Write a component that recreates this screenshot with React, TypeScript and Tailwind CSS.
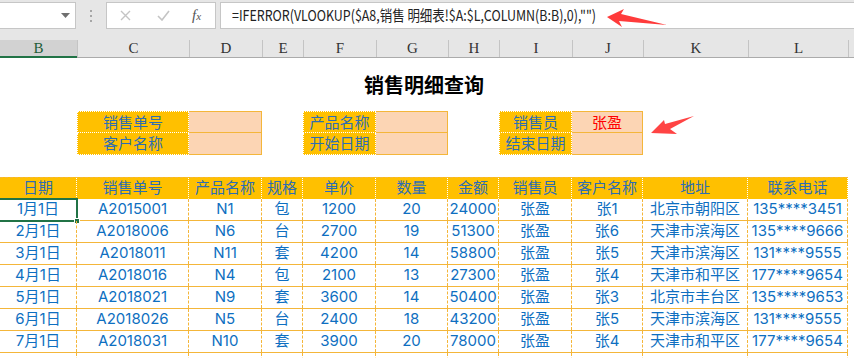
import React from "react";

// 表格列宽（B..L），与表头、表单、明细共用
const COLS =
  "grid grid-cols-[77px_112px_73px_41px_73px_72px_51px_73px_71px_105px_100px]";

const letters = ["B", "C", "D", "E", "F", "G", "H", "I", "J", "K", "L"];

const headers = ["日期", "销售单号", "产品名称", "规格", "单价", "数量", "金额", "销售员", "客户名称", "地址", "联系电话"];

const rows = [
  ["1月1日", "A2015001", "N1", "包", "1200", "20", "24000", "张盈", "张1", "北京市朝阳区", "135****3451"],
  ["2月1日", "A2018006", "N6", "台", "2700", "19", "51300", "张盈", "张6", "天津市滨海区", "135****9666"],
  ["3月1日", "A2018011", "N11", "套", "4200", "14", "58800", "张盈", "张5", "天津市滨海区", "131****9555"],
  ["4月1日", "A2018016", "N4", "包", "2100", "13", "27300", "张盈", "张4", "天津市和平区", "177****9654"],
  ["5月1日", "A2018021", "N9", "套", "3600", "14", "50400", "张盈", "张3", "北京市丰台区", "135****9653"],
  ["6月1日", "A2018026", "N5", "台", "2400", "18", "43200", "张盈", "张5", "天津市滨海区", "131****9555"],
  ["7月1日", "A2018031", "N10", "套", "3900", "20", "78000", "张盈", "张4", "天津市和平区", "177****9654"],
];

type FormCell = { kind: "empty" | "label" | "value"; text?: string; red?: boolean };

const formRows: FormCell[][] = [
  [
    { kind: "empty" },
    { kind: "label", text: "销售单号" },
    { kind: "value" },
    { kind: "empty" },
    { kind: "label", text: "产品名称" },
    { kind: "value" },
    { kind: "empty" },
    { kind: "label", text: "销售员" },
    { kind: "value", text: "张盈", red: true },
    { kind: "empty" },
    { kind: "empty" },
  ],
  [
    { kind: "empty" },
    { kind: "label", text: "客户名称" },
    { kind: "value" },
    { kind: "empty" },
    { kind: "label", text: "开始日期" },
    { kind: "value" },
    { kind: "empty" },
    { kind: "label", text: "结束日期" },
    { kind: "value" },
    { kind: "empty" },
    { kind: "empty" },
  ],
];

function FormulaBar() {
  return (
    <div className="h-[40px] bg-[#e6e6e6] pt-[2px] flex items-start">
      <div className="w-[76px] h-[27px] bg-white border border-l-0 border-[#c6c6c6] flex items-center justify-end pr-[5px]">
        <svg width="9" height="5" viewBox="0 0 9 5">
          <path d="M0 0h9L4.5 5z" fill="#6f6f6f" />
        </svg>
      </div>
      <div className="w-[30px] h-[27px] flex flex-col items-center justify-center gap-[3px]">
        <span className="w-[2px] h-[2px] bg-[#a6a6a6]" />
        <span className="w-[2px] h-[2px] bg-[#a6a6a6]" />
        <span className="w-[2px] h-[2px] bg-[#a6a6a6]" />
      </div>
      <div className="w-[110px] h-[27px] bg-white border border-[#c6c6c6] flex items-center">
        <svg className="ml-[13px]" width="11" height="11" viewBox="0 0 11 11">
          <path d="M1 1l9 9M10 1l-9 9" stroke="#c4c4c4" strokeWidth="1.4" />
        </svg>
        <svg className="ml-[26px]" width="13" height="11" viewBox="0 0 13 11">
          <path d="M1 6l4 4 7-9" stroke="#c4c4c4" strokeWidth="1.6" fill="none" />
        </svg>
        <span className="ml-[22px] text-[15px] italic text-[#555] font-['Liberation_Serif',serif] leading-none">
          f<span className="text-[11px]">x</span>
        </span>
      </div>
      <div className="ml-[4px] flex-1 h-[27px] bg-white border border-r-0 border-[#c6c6c6] flex items-center pl-[11px] text-[15px] text-[#222] whitespace-nowrap font-['Noto_Sans_CJK_SC',sans-serif]">
        <span className="inline-block origin-left scale-x-[0.83]">
          =IFERROR(VLOOKUP($A8,销售 明细表!$A:$L,COLUMN(B:B),0),"")
        </span>
      </div>
    </div>
  );
}

function ColumnHeaders() {
  return (
    <div className="flex h-[18px] bg-[#e6e6e6] border-b border-[#ababab] font-['Liberation_Serif',serif] text-[15px] leading-none">
      <div className={COLS}>
        {letters.map((l, i) => (
          <div
            key={l}
            className={
              i === 0
                ? "h-[18px] -mb-px bg-[#d2d2d2] border-b-2 border-[#217346] text-[#1d5c38] flex items-center justify-center"
                : "h-[17px] border-l border-[#c4c4c4] text-[#333] flex items-center justify-center"
            }
          >
            {l}
          </div>
        ))}
      </div>
      <div className="flex-1 h-[17px] border-l border-[#c4c4c4]" />
    </div>
  );
}

function FormBlock() {
  return (
    <div className="text-[15px] font-['Noto_Sans_CJK_SC',sans-serif]">
      {formRows.map((r, ri) => (
        <div key={ri} className={COLS}>
          {r.map((c, ci) => {
            if (c.kind === "empty") return <div key={ci} className="h-[22px]" />;
            if (c.kind === "label")
              return (
                <div
                  key={ci}
                  className={
                    ri === 0
                      ? "h-[22px] bg-[#ffc000] border border-dotted border-white text-[#2d6db3] flex items-center justify-center"
                      : "h-[22px] bg-[#ffc000] border-x border-b border-dotted border-white text-[#2d6db3] flex items-center justify-center"
                  }
                >
                  {c.text}
                </div>
              );
            return (
              <div
                key={ci}
                className={
                  (ri === 0
                    ? "h-[22px] bg-[#fcd5b4] border-t border-r border-b border-[#f4b63a] flex items-center justify-center"
                    : "h-[22px] bg-[#fcd5b4] border-r border-b border-[#f4b63a] flex items-center justify-center") +
                  (c.red ? " text-[#ff0000]" : "")
                }
              >
                {c.text}
              </div>
            );
          })}
        </div>
      ))}
    </div>
  );
}

function DataTable() {
  return (
    <div className="text-[15px] font-['Inter','Noto_Sans_CJK_SC',sans-serif]">
      <div className={COLS + " w-[848px] h-[22px] bg-[#ffc000] border-t border-dashed border-[#f4b63a]"}>
        {headers.map((h) => (
          <div
            key={h}
            className="h-[21px] border-r border-dotted border-white text-[#2d6db3] flex items-center justify-center whitespace-nowrap"
          >
            {h}
          </div>
        ))}
      </div>
      {rows.map((r, ri) => (
        <div key={ri} className={COLS + " w-[848px] h-[22px] border-b border-[#f4b63a]"}>
          {r.map((v, ci) => (
            <div
              key={ci}
              className="relative h-[21px] border-r border-dashed border-[#f4b63a] text-[#0e6fc1] flex items-center justify-center whitespace-nowrap"
            >
              {v}
              {ri === 0 && ci === 0 && (
                <>
                  <div className="absolute -left-[2px] -top-[1px] -right-[2px] -bottom-[2px] border-2 border-[#217346]" />
                  <div className="absolute -right-[4px] -bottom-[4px] w-[6px] h-[6px] bg-[#217346] border border-white" />
                </>
              )}
            </div>
          ))}
        </div>
      ))}
      <div className={COLS + " w-[848px] h-[22px]"}>
        {headers.map((h) => (
          <div key={h} className="h-[22px] border-r border-dashed border-[#f4b63a]" />
        ))}
      </div>
    </div>
  );
}

export default function App() {
  return (
    <div className="relative w-[854px] h-[358px] overflow-hidden bg-white">
      <FormulaBar />
      <ColumnHeaders />
      <div className="w-[848px] h-[53px] flex items-center justify-center text-[20px] font-bold text-black font-['Noto_Sans_CJK_SC',sans-serif]">
        销售明细查询
      </div>
      <FormBlock />
      <div className="h-[22px]" />
      <DataTable />

      {/* 两个红色箭头标注 */}
      <svg className="absolute left-0 top-0 pointer-events-none" width="854" height="358">
        <polygon points="607,17 624,9 621,14 667,25 619,21 622,27" fill="#ff3b3b" />
        <polygon points="651,133 664,120 665,124 694,116 670,129 677,134" fill="#ff4444" />
      </svg>
    </div>
  );
}
